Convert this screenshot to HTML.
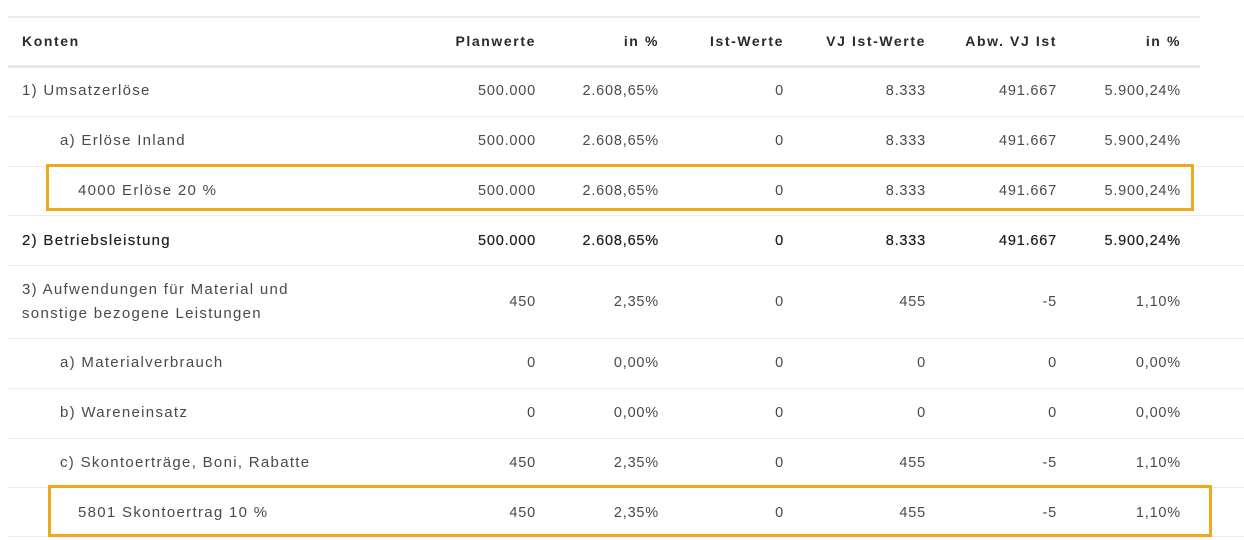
<!DOCTYPE html>
<html><head><meta charset="utf-8"><style>
body{margin:0;width:1244px;height:540px;background:#fff;position:relative;overflow:hidden;font-family:"Liberation Sans",sans-serif;color:#4a4a4a;font-size:15px}
.l{position:absolute;left:8px;height:1px;background:#e9ebef}
.c{position:absolute;white-space:nowrap;transform:translateY(-50%);letter-spacing:1.3px}
.n{text-align:right;letter-spacing:0.8px;margin-right:-1px;font-size:14.5px}
.b{color:#222;text-shadow:0 0 0.5px #222}
.h{color:#2a2a2a;font-weight:bold;font-size:14px;letter-spacing:1.6px}
.box{position:absolute;border:3px solid #f1a81c;box-sizing:border-box}
</style></head><body>
<div class="l" style="top:16px;width:1192px;height:2px"></div>
<div class="l" style="top:65px;width:1192px;height:3px;background:#e6e8ee"></div>
<div class="l" style="top:116px;width:1236px"></div>
<div class="l" style="top:166px;width:1236px"></div>
<div class="l" style="top:215px;width:1236px"></div>
<div class="l" style="top:265px;width:1236px"></div>
<div class="l" style="top:338px;width:1236px"></div>
<div class="l" style="top:388px;width:1236px"></div>
<div class="l" style="top:438px;width:1236px"></div>
<div class="l" style="top:487px;width:1236px"></div>
<div class="l" style="top:536px;width:1236px"></div>
<div class="box" style="left:46px;top:164px;width:1148px;height:47px"></div>
<div class="box" style="left:48px;top:485px;width:1164px;height:52px"></div>
<div id="rows"></div>
<script>
var rows=[
[41,22,"Konten",["Planwerte","in %","Ist-Werte","VJ Ist-Werte","Abw. VJ Ist","in %"],"h"],
[91,22,"1) Umsatzerlöse",["500.000","2.608,65%","0","8.333","491.667","5.900,24%"]],
[141,60,"a) Erlöse Inland",["500.000","2.608,65%","0","8.333","491.667","5.900,24%"]],
[191,78,"4000 Erlöse 20 %",["500.000","2.608,65%","0","8.333","491.667","5.900,24%"]],
[241,22,"2) Betriebsleistung",["500.000","2.608,65%","0","8.333","491.667","5.900,24%"],"b"],
[302,22,"3) Aufwendungen für Material und<br>sonstige bezogene Leistungen",["450","2,35%","0","455","-5","1,10%"]],
[363,60,"a) Materialverbrauch",["0","0,00%","0","0","0","0,00%"]],
[413,60,"b) Wareneinsatz",["0","0,00%","0","0","0","0,00%"]],
[463,60,"c) Skontoerträge, Boni, Rabatte",["450","2,35%","0","455","-5","1,10%"]],
[513,78,"5801 Skontoertrag 10 %",["450","2,35%","0","455","-5","1,10%"]]];
var R=[535,658,783,925,1056,1180],h="";
rows.forEach(function(r){var b=r[4]?" "+r[4]:"";
h+='<div class="c'+b+'" style="top:'+r[0]+'px;left:'+r[1]+'px;line-height:24px">'+r[2]+'</div>';
r[3].forEach(function(v,i){h+='<div class="c n'+b+'" style="top:'+r[0]+'px;right:'+(1244-R[i])+'px">'+v+'</div>';});});
document.getElementById("rows").innerHTML=h;
</script>
</body></html>
